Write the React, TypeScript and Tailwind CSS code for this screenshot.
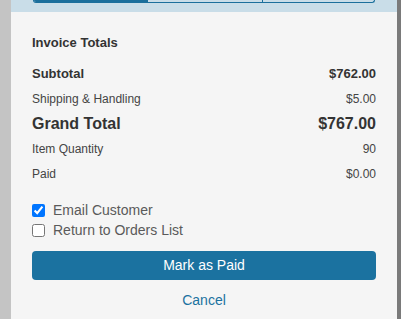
import { useState } from 'react';

const rows = [
  { label: 'Subtotal', value: '$762.00', cls: 'text-[13px] font-bold text-[#333]' },
  { label: 'Shipping & Handling', value: '$5.00', cls: 'text-[12px] text-[#444]' },
  { label: 'Grand Total', value: '$767.00', cls: 'text-[16px] font-bold text-[#333]' },
  { label: 'Item Quantity', value: '90', cls: 'text-[12px] text-[#444]' },
  { label: 'Paid', value: '$0.00', cls: 'text-[12px] text-[#444]' },
];

const App = () => {
  const [emailCustomer, setEmailCustomer] = useState(true);
  const [returnToList, setReturnToList] = useState(false);

  return (
    <div className="flex h-[319px] w-[401px] bg-[#c4c4c4] font-['Liberation_Sans',Arial,sans-serif]">
      <div className="w-[11px] shrink-0" />
      <div className="flex w-[386px] flex-col bg-[#f5f5f5]">
        {/* tab strip, scrolled mostly out of view */}
        <div className="h-[12px] bg-[#c9dde8] px-[22px]">
          <div className="flex h-[3px] overflow-hidden rounded-b-[5px] border border-t-0 border-[#1b6f9c]">
            <div className="w-[114px] bg-[#1b6f9c]" />
            <div className="w-[115px] border-r border-[#1b6f9c]" />
            <div className="flex-1" />
          </div>
        </div>

        <div className="flex flex-col px-[21px]">
          <div className="flex h-[42px] items-end pb-[2px] text-[13px] font-bold text-[#333]">Invoice Totals</div>
          <div className="h-[7px]" />
          {rows.map((r) => (
            <div key={r.label} className={`flex h-[25px] items-center justify-between ${r.cls}`}>
              <span>{r.label}</span>
              <span>{r.value}</span>
            </div>
          ))}

          <div className="mt-[17px] flex flex-col gap-[6px] text-[14px] text-[#5a5a5a]">
            <label className="flex h-[14px] items-center gap-[8px]">
              <input
                type="checkbox"
                checked={emailCustomer}
                onChange={() => setEmailCustomer(!emailCustomer)}
                className="h-[13px] w-[13px] accent-[#0075ff]"
              />
              Email Customer
            </label>
            <label className="flex h-[14px] items-center gap-[8px]">
              <input
                type="checkbox"
                checked={returnToList}
                onChange={() => setReturnToList(!returnToList)}
                className="h-[13px] w-[13px]"
              />
              Return to Orders List
            </label>
          </div>

          <button className="mt-[14px] h-[29px] w-full rounded-[4px] bg-[#1b72a0] text-[14px] text-white">
            Mark as Paid
          </button>
          <button className="mt-[10px] text-[14px] text-[#1b72a0]">Cancel</button>
        </div>
      </div>
      <div className="flex-1 bg-[#7a7a7a]" />
    </div>
  );
};

export default App;
